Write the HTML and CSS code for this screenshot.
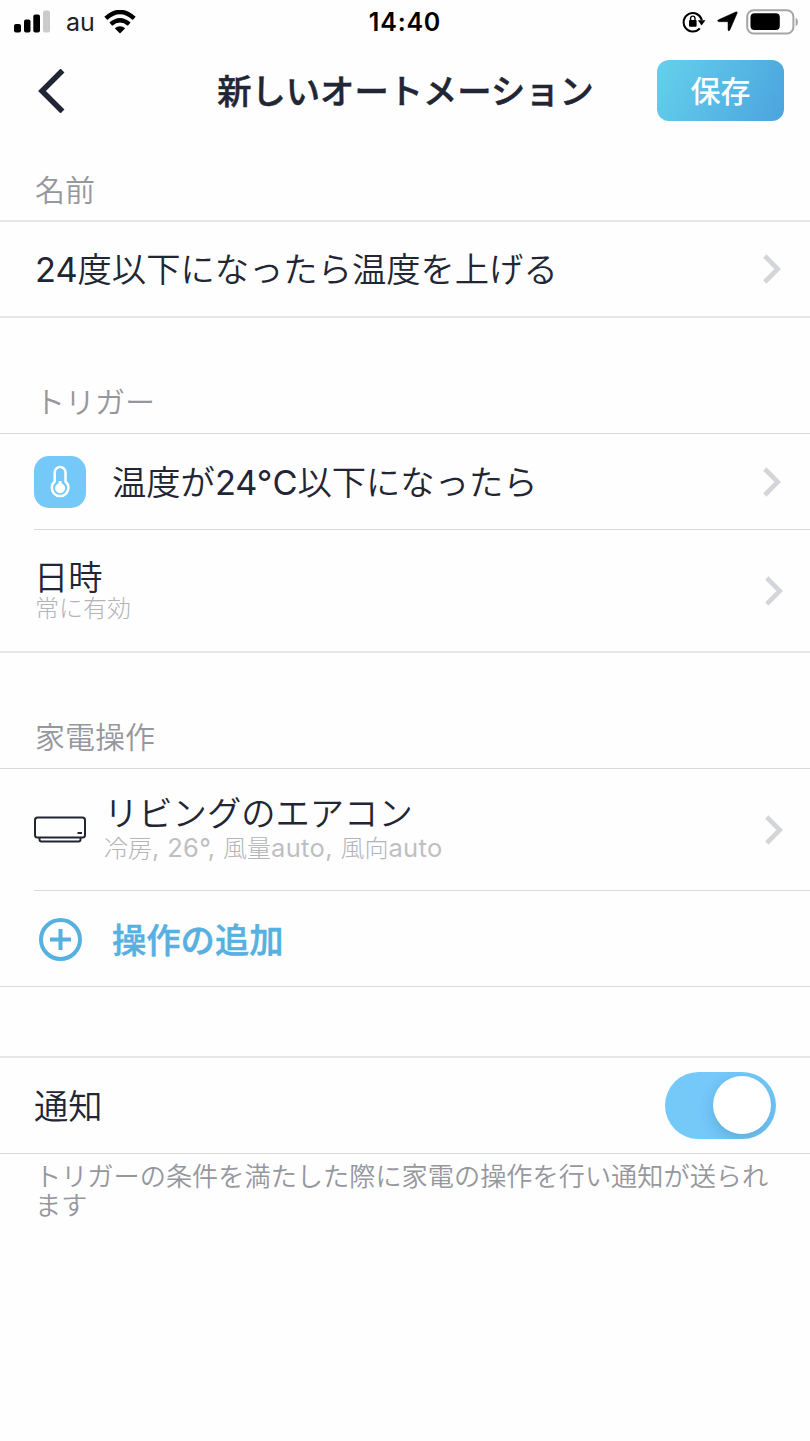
FILE: index.html
```html
<!DOCTYPE html>
<html lang="ja">
<head>
<meta charset="utf-8">
<title>新しいオートメーション</title>
<link rel="stylesheet" href="styles.css">
</head>
<body>
<div class="screen">
  <div class="status">
    <div class="status-left">
      <svg class="signal" width="37" height="23" viewBox="0 0 37 23"><rect x="0" y="14" width="7" height="8.5" rx="2"/><rect x="10" y="9.500" width="6.500" height="13" rx="2"/><rect x="19.300" y="4.500" width="6.700" height="18" rx="2"/><rect x="29" y="0.500" width="7" height="22" rx="2" fill="#cbcbcb"/></svg>
      <span class="carrier">au</span>
      <svg class="wifi" width="32" height="24" viewBox="0 0 32 24"><path d="M1.800 8.300Q16-4.300 30.200 8.300" fill="none" stroke="#000" stroke-width="4.400"/><path d="M6.800 14.200Q16 6.300 25.200 14.200" fill="none" stroke="#000" stroke-width="4.300"/><path d="M10.800 18.300Q16 14.300 21.200 18.300L16 23.600Z"/></svg>
    </div>
    <span class="clock">14:40</span>
    <div class="status-right">
      <svg width="24" height="22" viewBox="0 0 24 22"><path d="M17.800 17.300A9.200 9.200 0 1 1 19.800 9.200" fill="none" stroke="#000" stroke-width="2"/><path d="M15.800 9.200H23.500L19.600 14.400Z"/><rect x="7" y="9" width="7.600" height="6.700" rx="1"/><path d="M8.600 9.500V7.300a2.200 2.200 0 0 1 4.400 0V9.500" fill="none" stroke="#000" stroke-width="1.400"/></svg>
      <svg class="location" width="21" height="21" viewBox="0 0 21 21"><path d="M18.700 1Q20.800.200 20 2.400L12.900 18.900Q11.500 21 11 18.600V10.700H2Q-.7 10 1.600 8.700Z" stroke="#000" stroke-width=".5"/></svg>
      <svg class="battery" width="53" height="26" viewBox="0 0 53 26"><rect x="1.200" y="1.200" width="46.200" height="23.300" rx="6.500" fill="none" stroke="#a5a5a5" stroke-width="2"/><rect x="4.500" y="4.300" width="29.300" height="16.800" rx="4"/><path d="M49.700 8.800Q52 10 52 13T49.700 17Z" fill="#a5a5a5"/></svg>
    </div>
  </div>
  <header class="nav">
    <svg class="back" width="28" height="44" viewBox="0 0 28 44"><path d="M24.500 1.500L4 22L24.500 42.500" fill="none" stroke="#212534" stroke-width="5.500"/></svg>
    <h1 class="title">新しいオートメーション</h1>
    <button class="save">保存</button>
  </header>

  <h2 class="label label-name">名前</h2>
  <section class="group group-name">
    <div class="row">
      <span class="main"><span class="latin">24</span>度以下になったら温度を上げる</span>
      <svg class="chev" width="18" height="30" viewBox="0 0 18 30"><path d="M1.800 2L14.800 15L1.800 28" fill="none" stroke="#d4d5d8" stroke-width="4.600"/></svg>
    </div>
  </section>

  <h2 class="label">トリガー</h2>
  <section class="group group-trigger">
    <div class="row row-trigger">
      <span class="tile"><svg width="52" height="52" viewBox="0 0 52 52" fill="none" stroke="#fff"><path d="M20.700 25.500V16.500a5.400 5.400 0 0 1 10.800 0V25.500a8.300 8.300 0 1 1-10.800 0Z" stroke-width="2.500"/><path d="M26.100 25V32" stroke-width="3"/><circle cx="26.100" cy="32.300" r="5" fill="#fff" stroke="none"/></svg></span>
      <span class="main">温度が<span class="latin">24°C</span>以下になったら</span>
      <svg class="chev" width="18" height="30" viewBox="0 0 18 30"><path d="M1.800 2L14.800 15L1.800 28" fill="none" stroke="#d4d5d8" stroke-width="4.600"/></svg>
    </div>
    <div class="row row-date">
      <div class="stack"><span class="main">日時</span><span class="sub">常に有効</span></div>
      <svg class="chev" width="18" height="30" viewBox="0 0 18 30"><path d="M1.800 2L14.800 15L1.800 28" fill="none" stroke="#d4d5d8" stroke-width="4.600"/></svg>
    </div>
  </section>

  <h2 class="label">家電操作</h2>
  <section class="group group-device">
    <div class="row row-device">
      <svg class="aircon" width="52" height="28" viewBox="0 0 52 28" fill="none" stroke="#212534" stroke-width="2"><rect x="1" y="1.500" width="50" height="20" rx="2.500"/><path d="M5.500 21.500V23.500Q5.500 25.500 7.500 25.500H44.500Q46.500 25.500 46.500 23.500V21.500M43.500 17H48"/></svg>
      <div class="stack"><span class="main">リビングのエアコン</span><span class="sub">冷房<span class="latin">, 26°, </span>風量<span class="latin">auto, </span>風向<span class="latin">auto</span></span></div>
      <svg class="chev" width="18" height="30" viewBox="0 0 18 30"><path d="M1.800 2L14.800 15L1.800 28" fill="none" stroke="#d4d5d8" stroke-width="4.600"/></svg>
    </div>
    <div class="row row-add">
      <svg class="plus" width="44" height="44" viewBox="0 0 44 44" fill="none" stroke="#56b0e0" stroke-width="4"><circle cx="22.500" cy="22.500" r="19.500"/><path d="M12 22.500H33M22.500 12V33"/></svg>
      <span class="main">操作の追加</span>
    </div>
  </section>

  <section class="group group-notify">
    <div class="row">
      <span class="main">通知</span>
      <span class="toggle"><span class="knob"></span></span>
    </div>
  </section>
  <p class="note">トリガーの条件を満たした際に家電の操作を行い通知が送られます</p>
</div>
</body>
</html>
```
FILE: styles.css
```css
* { box-sizing: border-box; }
body {
  margin: 0;
  background: #fff;
  color: #212534;
  font-family: Inter, "Noto Sans CJK JP", sans-serif;
}
svg { display: block; flex: none; }
.screen { width: 810px; height: 1441px; overflow: hidden; background: #fefefe; }
.status {
  height: 42px;
  display: grid;
  grid-template-columns: 1fr auto 1fr;
  align-items: center;
  padding: 0 11px 0 14px;
  color: #000;
}
.status-left, .status-right { display: flex; align-items: center; }
.status-right { justify-content: flex-end; gap: 10px; }
.location { margin-left: 1px; margin-right: -2px; }
.carrier { margin: 0 9px 0 15px; padding-top: 1px; color: #222; font-size: 25px; line-height: 42px; }
.clock { padding-top: 1px; margin-left: -3px; font-size: 25px; font-weight: 600; line-height: 42px; letter-spacing: .8px; }
.nav {
  height: 96px;
  display: flex;
  align-items: center;
  justify-content: space-between;
  padding: 1px 26px 0 38px;
}
.back { margin-top: 1px; }
.title {
  margin: 2px 0 0 88px;
  font-size: 34.300px;
  font-weight: 500;
  line-height: 50px;
  white-space: nowrap;
  -webkit-text-stroke: .5px #212534;
}
.save {
  width: 127px;
  height: 61px;
  padding: 0;
  border: 0;
  border-radius: 12px;
  background: linear-gradient(115deg, #64d1ec, #4ca3de);
  color: #fff;
  font: 500 30px/58px Inter, "Noto Sans CJK JP", sans-serif;
}
.label {
  height: 115px;
  margin: 0;
  padding: 62px 35px 0;
  color: #96979d;
  font-size: 30px;
  font-weight: 350;
  line-height: 44px;
}
.label-name { height: 82px; padding-top: 30px; }
.group { border-top: 1px solid #d9dadc; border-bottom: 1px solid #d9dadc; }
.group-name { height: 98px; border-top: 2px solid #e6e6e8; border-bottom: 2px solid #e6e6e8; }
.row { height: 95px; display: flex; align-items: center; padding: 0 29px 0 35px; }
.group-name .row { height: 94px; }
.main { font-size: 34.300px; font-weight: 350; line-height: 44px; white-space: nowrap; }
.latin { font-weight: 400; }
.row > .main { padding-top: 2px; }
.chev { margin-left: auto; }
.group-trigger { height: 220px; border-bottom: 2px solid #e6e6e8; }
.row-trigger, .row-device { margin-left: 34px; padding-left: 0; border-bottom: 1px solid #d9dadc; }
.row-trigger { height: 96px; }
.tile { width: 52px; height: 52px; margin-right: 26px; border-radius: 15px; background: #74c9f9; }
.row-date { height: 122px; padding-right: 27px; }
.stack { display: flex; flex-direction: column; }
.row-date .stack { margin-bottom: 3px; }
.row-device .stack { margin-bottom: 7px; }
.sub { color: #b3b4b8; font-size: 24px; font-weight: 300; line-height: 24px; white-space: nowrap; }
.row-date .main { line-height: 38px; margin-left: -1px; }
.sub .latin { font-size: 25.500px; letter-spacing: .35px; color: #bebfc3; white-space: pre; }
.group-device { height: 219px; }
.row-device { height: 122px; padding-right: 27px; }
.aircon { margin-right: 18px; }
.row-add { color: #56b0e0; padding-left: 38px; }
.row-add .main { margin-left: 30px; padding-top: 4px; font-weight: 500; -webkit-text-stroke: .5px #56b0e0; }
.group-notify { height: 98px; margin-top: 69px; border-top: 2px solid #e6e6e8; }
.group-notify .main { margin-left: -1px; }
.toggle {
  width: 111px;
  height: 67px;
  margin-left: auto;
  margin-right: 5px;
  padding: 4px 5px;
  border-radius: 34px;
  background: #74c9f9;
  display: flex;
  justify-content: flex-end;
  overflow: hidden;
}
.knob { width: 58px; height: 58px; border-radius: 50%; background: #fff; box-shadow: 0 5px 15px rgba(0, 50, 90, .2); }
.note { margin: 8px 35px 0; color: #96979d; font-size: 26.200px; font-weight: 350; line-height: 29px; }
```
